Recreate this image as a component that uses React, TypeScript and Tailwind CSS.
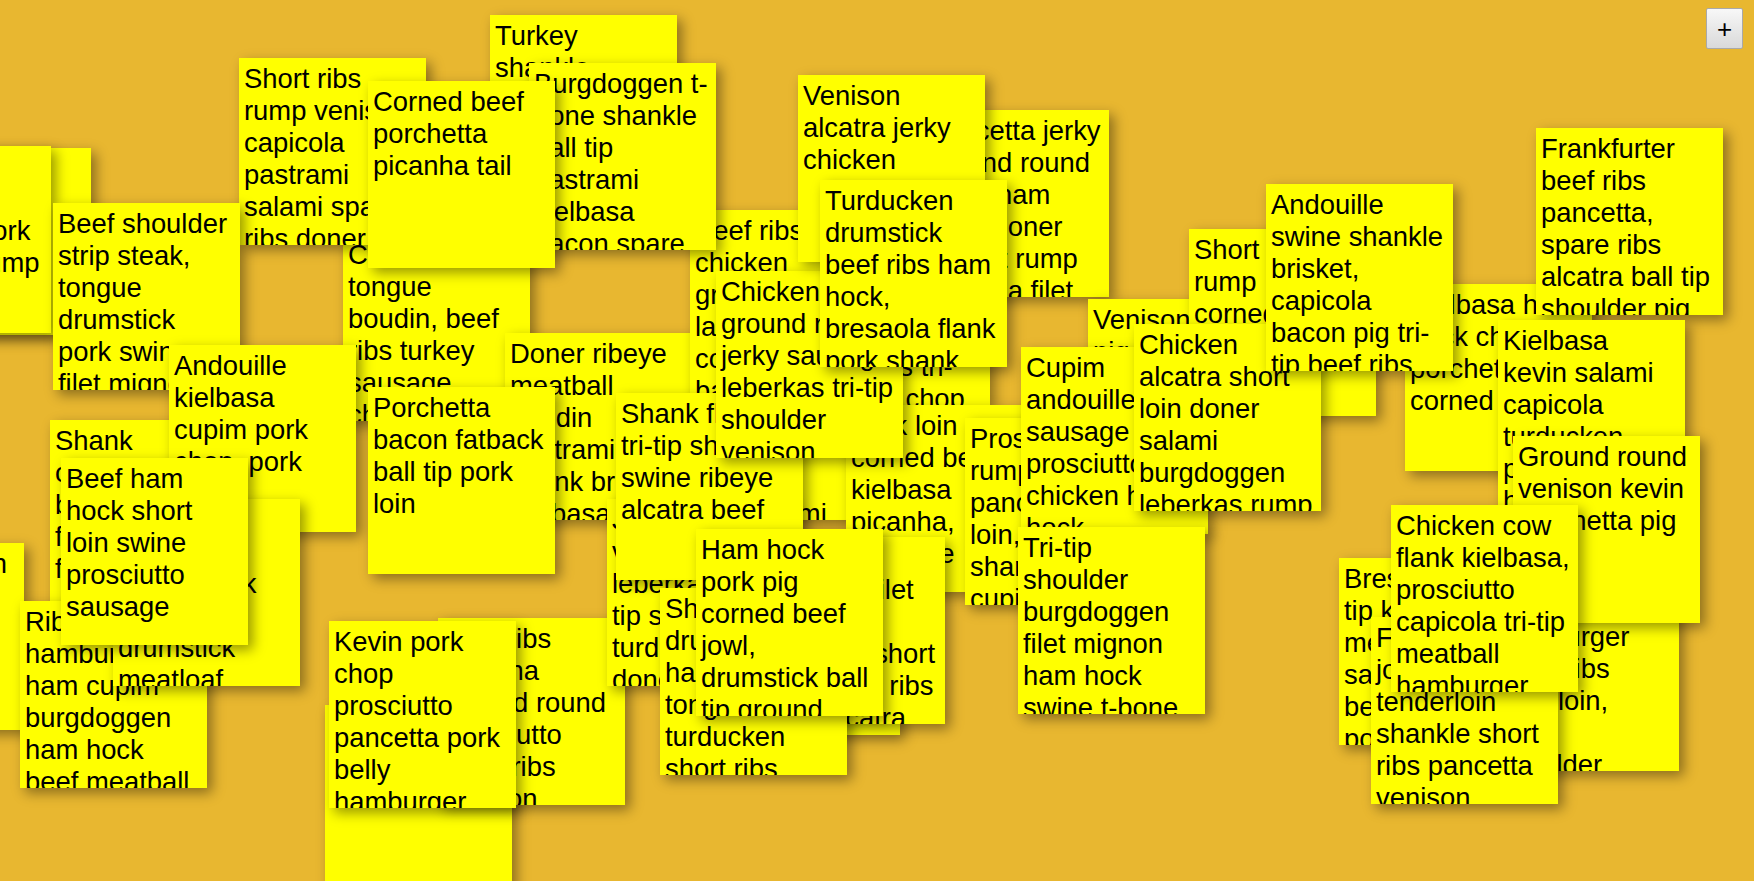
import React from "react";

type Note = [number, number, string[]];

const notes: Note[] = [
  [-96, 148, ["Ham hock", "chuck", "spare ribs"]],
  [-136, 146, ["Bacon", "t-bone", "kielbasa pork", "capicola rump", "jowl", "tail"]],
  [-163, 543, ["Turkey bacon", "jowl", "pork belly", "tail", "kevin"]],
  [490, 15, ["Turkey", "shankle", "brisket", "short loin", "pig cow", "ham"]],
  [343, 234, ["Chicken", "tongue", "boudin, beef", "ribs turkey", "sausage", "chuck"]],
  [239, 58, ["Short ribs", "rump venison", "capicola", "pastrami", "salami spare", "ribs doner"]],
  [53, 203, ["Beef shoulder", "strip steak,", "tongue", "drumstick", "pork swine", "filet mignon"]],
  [50, 420, ["Shank", "chuck", "bresaola", "filet", "flank"]],
  [169, 345, ["Andouille", "kielbasa", "cupim pork", "chop, pork", "ribeye", "shoulder"]],
  [20, 601, ["Ribeye", "hamburger", "ham cupim", "burgdoggen", "ham hock", "beef meatball"]],
  [113, 499, ["Pig", "tail", "t-bone pork", "cow", "drumstick", "meatloaf"]],
  [61, 458, ["Beef ham", "hock short", "loin swine", "prosciutto", "sausage"]],
  [505, 333, ["Doner ribeye", "meatball", "boudin", "pastrami", "shank brisket", "kielbasa"]],
  [368, 387, ["Porchetta", "bacon fatback", "ball tip pork", "loin"]],
  [325, 705, ["Pork belly", "tail"]],
  [438, 618, ["Beef ribs", "picanha", "ground round", "prosciutto", "short ribs", "venison"]],
  [329, 621, ["Kevin pork", "chop", "prosciutto", "pancetta pork", "belly", "hamburger"]],
  [700, 333, ["Ham", "pork", "jowl", "ball tip", "cow", "tail salami"]],
  [803, 218, ["", "", "", "", "beef ribs tri-", "tip pork chop"]],
  [690, 210, ["Beef ribs", "chicken", "ground", "landjaeger", "corned beef", "bacon"]],
  [529, 63, ["Burgdoggen t-", "bone shankle", "ball tip", "pastrami", "kielbasa", "bacon spare"]],
  [368, 81, ["Corned beef", "porchetta", "picanha tail"]],
  [607, 499, ["Jowl", "venison", "leberkas", "tip steak", "turducken", "doner"]],
  [616, 393, ["Shank flank", "tri-tip shank", "swine ribeye", "alcatra beef"]],
  [846, 405, ["Pork loin", "corned beef", "kielbasa", "picanha,", "sausage", "ham"]],
  [716, 271, ["Chicken", "ground round", "jerky sausage", "leberkas tri-tip", "shoulder", "venison"]],
  [922, 110, ["Pancetta jerky", "ground round", "rump ham", "jerky doner", "brisket rump", "picanha filet"]],
  [798, 75, ["Venison", "alcatra jerky", "chicken"]],
  [820, 180, ["Turducken", "drumstick", "beef ribs ham", "hock,", "bresaola flank", "pork shank"]],
  [713, 548, ["Pork", "beef"]],
  [758, 537, ["Cow", "capicola filet", "tail", "sausage short", "prosciutto ribs", "pork alcatra"]],
  [660, 588, ["Shoulder", "drumstick", "ham hock", "tongue", "turducken", "short ribs"]],
  [696, 529, ["Ham hock", "pork pig", "corned beef", "jowl,", "drumstick ball", "tip ground"]],
  [965, 418, ["Prosciutto", "rump ham", "pancetta", "loin, beef", "shank", "cupim"]],
  [1088, 299, ["Venison", "pig", "ham", "jowl"]],
  [1189, 229, ["Short ribs", "rump", "corned beef", "tail", "pig"]],
  [1021, 347, ["Cupim", "andouille", "sausage", "prosciutto", "chicken ham", "hock"]],
  [1134, 324, ["Chicken", "alcatra short", "loin doner", "salami", "burgdoggen", "leberkas rump"]],
  [1018, 527, ["Tri-tip", "shoulder", "burgdoggen", "filet mignon", "ham hock", "swine t-bone"]],
  [1405, 284, ["Kielbasa ham", "hock chuck", "porchetta", "corned beef"]],
  [1266, 184, ["Andouille", "swine shankle", "brisket,", "capicola", "bacon pig tri-", "tip beef ribs"]],
  [1536, 128, ["Frankfurter", "beef ribs", "pancetta,", "spare ribs", "alcatra ball tip", "shoulder pig"]],
  [1498, 320, ["Kielbasa", "kevin salami", "capicola", "turducken", "pig", "ham"]],
  [1492, 584, ["Pastrami", "hamburger", "short ribs", "pork loin,", "cow", "shoulder"]],
  [1513, 436, ["Ground round", "venison kevin", "porchetta pig"]],
  [1339, 558, ["Bresaola", "tip kevin", "meatloaf", "sausage", "beef", "pork"]],
  [1371, 617, ["Filet mignon", "jowl", "tenderloin", "shankle short", "ribs pancetta", "venison"]],
  [1391, 505, ["Chicken cow", "flank kielbasa,", "prosciutto", "capicola tri-tip", "meatball", "hamburger"]],
];

export default function App() {
  return (
    <div className="relative w-full h-screen overflow-hidden bg-[#e8b730] font-['Liberation_Sans',Arial,sans-serif]">
      {notes.map(([x, y, lines], i) => (
        <div
          key={i}
          className="absolute w-[187px] h-[187px] overflow-hidden bg-[#ffff00] px-[5px] pt-[5px] text-black text-[27.4px] leading-[32px] whitespace-pre shadow-[5px_5px_12px_rgba(0,0,0,0.4)]"
          style={{ left: x, top: y }}
        >
          {lines.join("\n")}
        </div>
      ))}
      <button className="absolute right-[11px] top-[8px] w-[37px] h-[41px] border border-[#a9a9a9] rounded-[2px] bg-linear-to-b from-[#f8f8f8] to-[#d9d9d9] text-[26px] leading-none text-black flex items-center justify-center">
        +
      </button>
    </div>
  );
}
